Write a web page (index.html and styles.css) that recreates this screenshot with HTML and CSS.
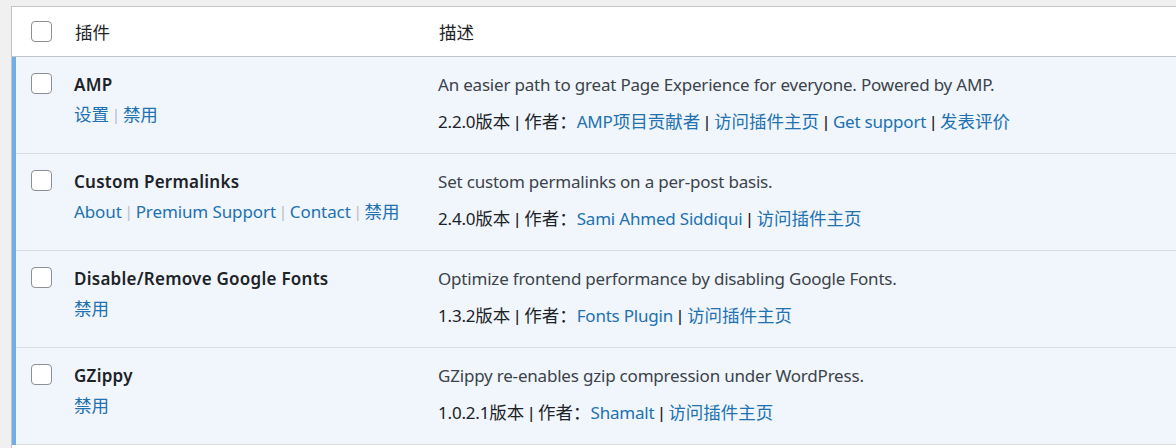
FILE: index.html
```html
<!DOCTYPE html>
<html lang="zh-CN">
<head>
<meta charset="utf-8">
<title>插件</title>
<link rel="stylesheet" href="styles.css">
</head>
<body>
<div class="plugins">
  <div class="head">
    <div class="cell check"><span class="box"></span></div>
    <div class="cell name"><span class="zh">插件</span></div>
    <div class="cell desc"><span class="zh">描述</span></div>
  </div>

  <div class="row active">
    <div class="cell check"><span class="box"></span></div>
    <div class="cell name">
      <strong class="title">AMP</strong>
      <div class="actions"><a class="zh">设置</a><span class="sep"> | </span><a class="zh">禁用</a></div>
    </div>
    <div class="cell desc">
      <p class="text">An easier path to great Page Experience for everyone. Powered by AMP.</p>
      <p class="meta">2.2.0<span class="zh">版本</span><span class="bar"> | </span><span class="zh">作者：</span><a>AMP<span class="zh">项目贡献者</span></a><span class="bar"> | </span><a class="zh">访问插件主页</a><span class="bar"> | </span><a>Get support</a><span class="bar"> | </span><a class="zh">发表评价</a></p>
    </div>
  </div>

  <div class="row active">
    <div class="cell check"><span class="box"></span></div>
    <div class="cell name">
      <strong class="title">Custom Permalinks</strong>
      <div class="actions"><a>About</a><span class="sep"> | </span><a>Premium Support</a><span class="sep"> | </span><a>Contact</a><span class="sep"> | </span><a class="zh">禁用</a></div>
    </div>
    <div class="cell desc">
      <p class="text">Set custom permalinks on a per-post basis.</p>
      <p class="meta">2.4.0<span class="zh">版本</span><span class="bar"> | </span><span class="zh">作者：</span><a>Sami Ahmed Siddiqui</a><span class="bar"> | </span><a class="zh">访问插件主页</a></p>
    </div>
  </div>

  <div class="row active">
    <div class="cell check"><span class="box"></span></div>
    <div class="cell name">
      <strong class="title">Disable/Remove Google Fonts</strong>
      <div class="actions"><a class="zh">禁用</a></div>
    </div>
    <div class="cell desc">
      <p class="text">Optimize frontend performance by disabling Google Fonts.</p>
      <p class="meta">1.3.2<span class="zh">版本</span><span class="bar"> | </span><span class="zh">作者：</span><a>Fonts Plugin</a><span class="bar"> | </span><a class="zh">访问插件主页</a></p>
    </div>
  </div>

  <div class="row active">
    <div class="cell check"><span class="box"></span></div>
    <div class="cell name">
      <strong class="title">GZippy</strong>
      <div class="actions"><a class="zh">禁用</a></div>
    </div>
    <div class="cell desc">
      <p class="text">GZippy re-enables gzip compression under WordPress.</p>
      <p class="meta">1.0.2.1<span class="zh">版本</span><span class="bar"> | </span><span class="zh">作者：</span><a>Shamalt</a><span class="bar"> | </span><a class="zh">访问插件主页</a></p>
    </div>
  </div>

  <div class="row inactive">
    <div class="cell check"><span class="box"></span></div>
    <div class="cell name"></div>
    <div class="cell desc"></div>
  </div>
</div>
</body>
</html>
```

FILE: styles.css
```css
html, body {
  margin: 0;
  padding: 0;
  overflow: hidden;
  background: #f0f0f1;
}
body {
  padding: 6px 0 0 11px;
  font-family: "Noto Sans", "Noto Sans CJK SC", sans-serif;
  font-size: 17px;
  line-height: 25px;
  color: #3c434a;
}
.plugins {
  width: 1300px;
  border: 1px solid #c3c4c7;
  background: #fff;
}
.head {
  display: grid;
  grid-template-columns: 62px 364px 1fr;
  height: 49px;
  border-bottom: 1px solid #c3c4c7;
  color: #1d2327;
}
.head .cell {
  padding-top: 13px;
}
.head .check {
  padding-top: 14px;
}
.head .name, .head .desc {
  padding-left: 1px;
}
.row {
  display: grid;
  grid-template-columns: 58px 364px 1fr;
  height: 97px;
  box-sizing: border-box;
}
.row.active {
  background: #f0f6fc;
  border-left: 4px solid #72aee6;
}
.row.active .cell {
  border-bottom: 1px solid #dcdcde;
}
.row.inactive {
  grid-template-columns: 62px 364px 1fr;
  background: #fff;
}
.cell {
  box-sizing: border-box;
}
.check {
  padding-left: 19px;
}
.row .check {
  padding-left: 15px;
  padding-top: 16px;
}
.box {
  display: block;
  width: 21px;
  height: 21px;
  box-sizing: border-box;
  border: 1px solid #8c8f94;
  border-radius: 4px;
  background: #fff;
}
.row .name, .row .desc {
  padding-top: 15px;
}
.title {
  display: block;
  font-weight: 600;
  color: #1d2327;
  white-space: nowrap;
  letter-spacing: 0.25px;
}
.actions {
  margin-top: 5px;
  color: #2271b1;
  white-space: nowrap;
  letter-spacing: -0.1px;
}
.zh {
  font-size: 17.5px;
  letter-spacing: 0;
}
.sep, .bar {
  font-family: "Liberation Sans", sans-serif;
  letter-spacing: 0;
}
.sep {
  color: #c3c4c7;
}
.bar {
  color: #1d2327;
}
a {
  color: #2271b1;
  text-decoration: none;
}
.text, .meta {
  margin: 0;
  white-space: nowrap;
  letter-spacing: -0.2px;
}
.text {
  color: #3c434a;
}
.meta {
  margin-top: 12px;
  color: #1d2327;
}
```
